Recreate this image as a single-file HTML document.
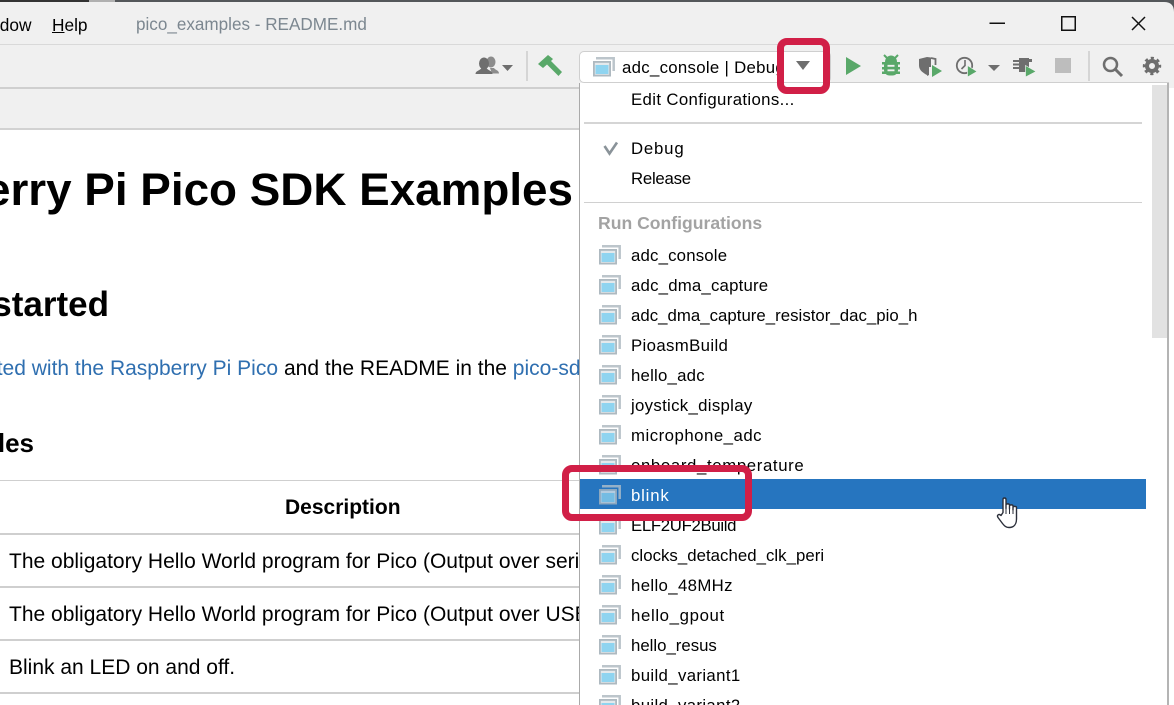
<!DOCTYPE html>
<html><head><meta charset="utf-8"><style>
html,body{margin:0;padding:0;width:1174px;height:705px;overflow:hidden;background:#fff}
body{position:relative;font-family:"Liberation Sans",sans-serif;color:#000}
.a{position:absolute;white-space:nowrap}
.m{position:absolute;left:631px;font-size:16.8px;line-height:24px;height:24px;white-space:nowrap;color:#000}
.i{position:absolute;left:599px;width:22px;height:20px}
.t{position:absolute;left:0;width:579px;height:2px;background:#cfcfcf}
.clip{position:absolute;left:0;top:0;width:1174px;height:705px;overflow:hidden}
.doc{position:absolute;left:0;top:0;width:579px;height:705px;overflow:hidden}
</style></head><body>
<svg width="0" height="0" style="position:absolute"><defs>
<symbol id="c" viewBox="0 0 22 20"><path d="M3 1.300H20.700V14" fill="none" stroke="#bcc5cb" stroke-width="2.500"/><rect x="0" y="4" width="18" height="15.500" fill="#aeb9c0"/><rect x="1.800" y="5.800" width="14.400" height="11.900" fill="#e4e9ec"/><rect x="2.500" y="8" width="13" height="9" fill="#8fd4f0"/></symbol>
</defs></svg>

<!-- chrome -->
<div class="a" style="left:0;top:0;width:1174px;height:88px;background:#f0f0f0"></div>
<div class="a" style="left:0;top:88px;width:579px;height:41px;background:#f0f0f0"></div>
<div class="a" style="left:0;top:0;width:89px;height:2px;background:#333"></div>
<div class="a" style="left:89px;top:0;width:26px;height:2px;background:#b0b0b0"></div>
<div class="a" style="left:115px;top:0;width:1059px;height:2px;background:#54575a"></div>
<svg class="a" style="left:1162px;top:0" width="12" height="12"><path d="M0 2H2Q12 2 12 12V0H0Z" fill="#54575a"/></svg>
<div class="a" style="left:0;top:44px;width:1174px;height:1px;background:#d9d9d9"></div>
<div class="a" style="left:0;top:87px;width:579px;height:2px;background:#cfcfcf"></div>
<div class="a" style="left:0;top:128px;width:579px;height:2px;background:#d2d2d2"></div>

<div class="a" style="left:52px;top:13px;font-size:17.300px;line-height:24px"><span style="text-decoration:underline">H</span>elp</div>
<div class="a" style="left:136px;top:13px;font-size:17.100px;line-height:24px;color:#7c8790">pico_examples - README.md</div>

<!-- window controls -->
<svg class="a" style="left:985px;top:12px" width="165" height="22" fill="none" stroke="#111" stroke-width="1.5">
<path d="M4.5 11.25H20"/><rect x="76.75" y="4.75" width="13.5" height="13.5"/><path d="M147 5L160 18M160 5L147 18"/>
</svg>

<!-- toolbar left -->
<svg class="a" style="left:474px;top:54px" width="40" height="24" viewBox="0 0 40 24">
<ellipse cx="17" cy="8" rx="4.500" ry="5.500" fill="#8c8c8c"/>
<path d="M16 14h4c1 2 5 2 5 5.500H18z" fill="#8c8c8c"/>
<ellipse cx="10" cy="9.500" rx="5" ry="6" fill="#6e6e6e"/>
<path d="M1.500 20c0-3.500 5-3.500 6.500-6.500h4c1.500 3 6.500 3 6.500 6.500z" fill="#6e6e6e"/>
<path d="M28 11H39L33.500 17Z" fill="#6e6e6e"/>
</svg>
<div class="a" style="left:526px;top:51px;width:2px;height:30px;background:#d5d5d5"></div>
<svg class="a" style="left:536px;top:53px" width="26" height="24" viewBox="0 0 26 24">
<path d="M2 11L12 2 17 6 15 8 26 19 22.500 23 11 11.500 7 15Z" fill="#59a869"/>
</svg>

<!-- combo -->
<div class="a" style="left:579px;top:51px;width:250px;height:30px;background:#fff;border:1px solid #cfcfcf;border-radius:5px"></div>
<svg class="a" style="left:593px;top:57px" width="22" height="20"><use href="#c"/></svg>
<div class="a" style="left:622px;top:56px;font-size:16.8px;line-height:24px;letter-spacing:.3px;color:#000">adc_console | Debug</div>
<div class="a" style="left:829px;top:82px;width:340px;height:1px;background:#cfcfcf"></div>

<!-- toolbar right -->
<svg class="a" style="left:840px;top:50px" width="325" height="32" viewBox="0 0 325 32">
<path d="M6 7L21 16 6 25Z" fill="#59a869"/>
<g fill="#59a869"><path d="M45 12a6 6.500 0 0 1 12 0z"/><path d="M44 5L47.500 8.500M58 5L54.500 8.500" stroke="#59a869" stroke-width="2" fill="none"/><rect x="44" y="10" width="14" height="15.500" rx="5.500"/><rect x="42" y="12" width="18" height="2.500"/><rect x="42" y="17" width="18" height="2.500"/><rect x="42" y="21.500" width="18" height="2.500"/></g>
<path d="M47.500 15.800h7M47.500 20.300h7" stroke="#f0f0f0" stroke-width="1.800" fill="none"/>
<path d="M79 9l8-2v18c-4-2-8-5-8-9.500z" fill="#6e6e6e"/><path d="M87 7l4 .5v9.500h-2v8l-2 1z" fill="#6e6e6e"/>
<path d="M91 8l4.500 1v6" fill="none" stroke="#6e6e6e" stroke-width="1.800"/>
<path d="M92 15L102 21 92 27Z" fill="#59a869"/>
<circle cx="124.500" cy="15.500" r="7.700" fill="none" stroke="#6e6e6e" stroke-width="1.800"/><path d="M125 10v5.500l-3.500 3.500" fill="none" stroke="#6e6e6e" stroke-width="1.600"/>
<path d="M127.500 15.500L137 21.500 127.500 27Z" fill="#59a869" stroke="#f0f0f0" stroke-width=".7"/>
<path d="M148 15H160L154 21Z" fill="#6e6e6e"/>
<path d="M179 8H189V9H192V12H189V22H179V19H173V17H179V15.500H173V13.500H179V12H173V10H179Z" fill="#6e6e6e"/>
<path d="M185.500 15.500L196 21.500 185.500 27Z" fill="#59a869" stroke="#f0f0f0" stroke-width=".7"/>
<rect x="215" y="8" width="16" height="15" fill="#bdbdbd"/>
</svg>
<div class="a" style="left:1088px;top:51px;width:2px;height:30px;background:#d5d5d5"></div>
<svg class="a" style="left:1100px;top:53px" width="68" height="26" viewBox="0 0 68 26">
<circle cx="10.500" cy="11.500" r="6.500" fill="none" stroke="#6e6e6e" stroke-width="2.500"/><path d="M15.500 16.500L22 23" stroke="#6e6e6e" stroke-width="3" fill="none"/>
<circle cx="52" cy="13" r="5" fill="none" stroke="#6e6e6e" stroke-width="4"/>
<circle cx="52" cy="13" r="7.800" fill="none" stroke="#6e6e6e" stroke-width="2.800" stroke-dasharray="3.100 3.030" stroke-dashoffset="1.500"/>
</svg>

<!-- document -->
<div class="doc">
<div class="a" style="top:13px;font-size:17.300px;line-height:24px;left:-30px">Window</div>
<div class="a" style="right:6px;top:162px;font-size:45.800px;font-weight:bold;line-height:56px">Raspberry Pi Pico SDK Examples</div>
<div class="a" style="right:470px;top:283px;font-size:35px;font-weight:bold;line-height:44px">Getting started</div>
<div class="a" style="right:301px;top:356px;font-size:21px;line-height:26px;color:#2f6fb0">Getting started with the Raspberry Pi Pico</div>
<div class="a" style="left:284px;top:356px;font-size:21px;line-height:26px">and the README in the <span style="color:#2f6fb0">pico-sdk</span></div>
<div class="a" style="right:545px;top:427px;font-size:26px;font-weight:bold;line-height:32px">Examples</div>
<div class="t" style="top:480px;height:1px"></div>
<div class="t" style="top:533px"></div>
<div class="t" style="top:586px"></div>
<div class="t" style="top:639px"></div>
<div class="t" style="top:692px"></div>
<div class="a" style="left:285px;top:495px;font-size:21px;font-weight:bold;line-height:26px">Description</div>
<div class="a" style="left:9px;top:549px;font-size:21px;line-height:26px">The obligatory Hello World program for Pico (Output over serial)</div>
<div class="a" style="left:9px;top:602px;font-size:21px;line-height:26px">The obligatory Hello World program for Pico (Output over USB)</div>
<div class="a" style="left:9px;top:655px;font-size:21px;line-height:26px">Blink an LED on and off.</div>
</div>

<!-- popup -->
<div class="clip">
<div class="a" style="left:579px;top:83px;width:588px;height:622px;background:#fff;border-left:1px solid #aaa;box-sizing:border-box"></div>
<div class="a" style="left:1167px;top:83px;width:2px;height:622px;background:#b4b4b4"></div>
<div class="a" style="left:1152px;top:85px;width:15px;height:253px;background:#e2e2e2"></div>
<div class="a" style="left:584px;top:122px;width:558px;height:2px;background:#d5d5d5"></div>
<div class="a" style="left:584px;top:202px;width:558px;height:1px;background:#d0d0d0"></div>
<div class="m" style="top:88px;letter-spacing:.36px">Edit Configurations...</div>
<svg class="a" style="left:602px;top:141px" width="18" height="15"><path d="M2.500 5L7.500 12.500 15 1.500" fill="none" stroke="#8a9399" stroke-width="2.600"/></svg>
<div class="m" style="top:137px;letter-spacing:.8px">Debug</div>
<div class="m" style="top:167px;letter-spacing:-.25px">Release</div>
<div class="a" style="left:598px;top:211px;font-size:17.600px;font-weight:bold;line-height:24px;color:#a3a3a3">Run Configurations</div>

<div class="a" style="left:580px;top:479px;width:566px;height:30px;background:#2675bf"></div>

<svg class="i" style="top:245px"><use href="#c"/></svg><div class="m" style="top:244px;letter-spacing:.18px">adc_console</div>
<svg class="i" style="top:275px"><use href="#c"/></svg><div class="m" style="top:274px;letter-spacing:.2px">adc_dma_capture</div>
<svg class="i" style="top:305px"><use href="#c"/></svg><div class="m" style="top:304px;letter-spacing:.03px">adc_dma_capture_resistor_dac_pio_h</div>
<svg class="i" style="top:335px"><use href="#c"/></svg><div class="m" style="top:334px;letter-spacing:.36px">PioasmBuild</div>
<svg class="i" style="top:365px"><use href="#c"/></svg><div class="m" style="top:364px;letter-spacing:.22px">hello_adc</div>
<svg class="i" style="top:395px"><use href="#c"/></svg><div class="m" style="top:394px;letter-spacing:.31px">joystick_display</div>
<svg class="i" style="top:425px"><use href="#c"/></svg><div class="m" style="top:424px;letter-spacing:.5px">microphone_adc</div>
<svg class="i" style="top:455px"><use href="#c"/></svg><div class="m" style="top:454px;letter-spacing:.63px">onboard_temperature</div>
<svg class="i" style="top:485px;opacity:.75"><use href="#c"/></svg><div class="m" style="top:484px;color:#fff;letter-spacing:.8px">blink</div>
<svg class="i" style="top:515px"><use href="#c"/></svg><div class="m" style="top:514px;letter-spacing:-.33px">ELF2UF2Build</div>
<svg class="i" style="top:545px"><use href="#c"/></svg><div class="m" style="top:544px;letter-spacing:.04px">clocks_detached_clk_peri</div>
<svg class="i" style="top:575px"><use href="#c"/></svg><div class="m" style="top:574px;letter-spacing:.36px">hello_48MHz</div>
<svg class="i" style="top:605px"><use href="#c"/></svg><div class="m" style="top:604px;letter-spacing:.64px">hello_gpout</div>
<svg class="i" style="top:635px"><use href="#c"/></svg><div class="m" style="top:634px">hello_resus</div>
<svg class="i" style="top:665px"><use href="#c"/></svg><div class="m" style="top:664px;letter-spacing:.36px">build_variant1</div>
<svg class="i" style="top:695px"><use href="#c"/></svg><div class="m" style="top:694px;letter-spacing:.36px">build_variant2</div>
</div>

<!-- arrow + highlights -->
<div class="a" style="left:785px;top:52px;width:37px;height:29px;background:#fff"></div>
<svg class="a" style="left:795px;top:60px" width="16" height="12"><path d="M1 1H15L8 10Z" fill="#6e6e6e"/></svg>
<div class="a" style="left:777px;top:38px;width:39px;height:42px;border:7px solid #d11f47;border-radius:10px"></div>
<div class="a" style="left:562px;top:465px;width:176px;height:42px;border:7px solid #d11f47;border-radius:10px"></div>

<!-- cursor -->
<svg class="a" style="left:995px;top:495px" width="28" height="36" viewBox="0 0 28 36">
<path d="M8 17.500V4.500C8 2.500 11 2.500 11 4.500V13.500V10C11 8.500 14.500 8.500 14.500 10V14V11C14.500 9.500 18 9.500 18 11V15V12.500C18 11 21.500 11 21.500 12.500V24C21.500 29 19 32.500 14 32.500C11 32.500 9.500 31 7.500 28.500L3 22.500C1.500 20 4 18.500 6 20.500Z" fill="#fff" stroke="#2b2f3a" stroke-width="1.400" stroke-linejoin="round"/>
<path d="M11 13.500V19M14.500 14V19M18 15V19" stroke="#2b2f3a" stroke-width="1" fill="none"/>
</svg>
</body></html>
